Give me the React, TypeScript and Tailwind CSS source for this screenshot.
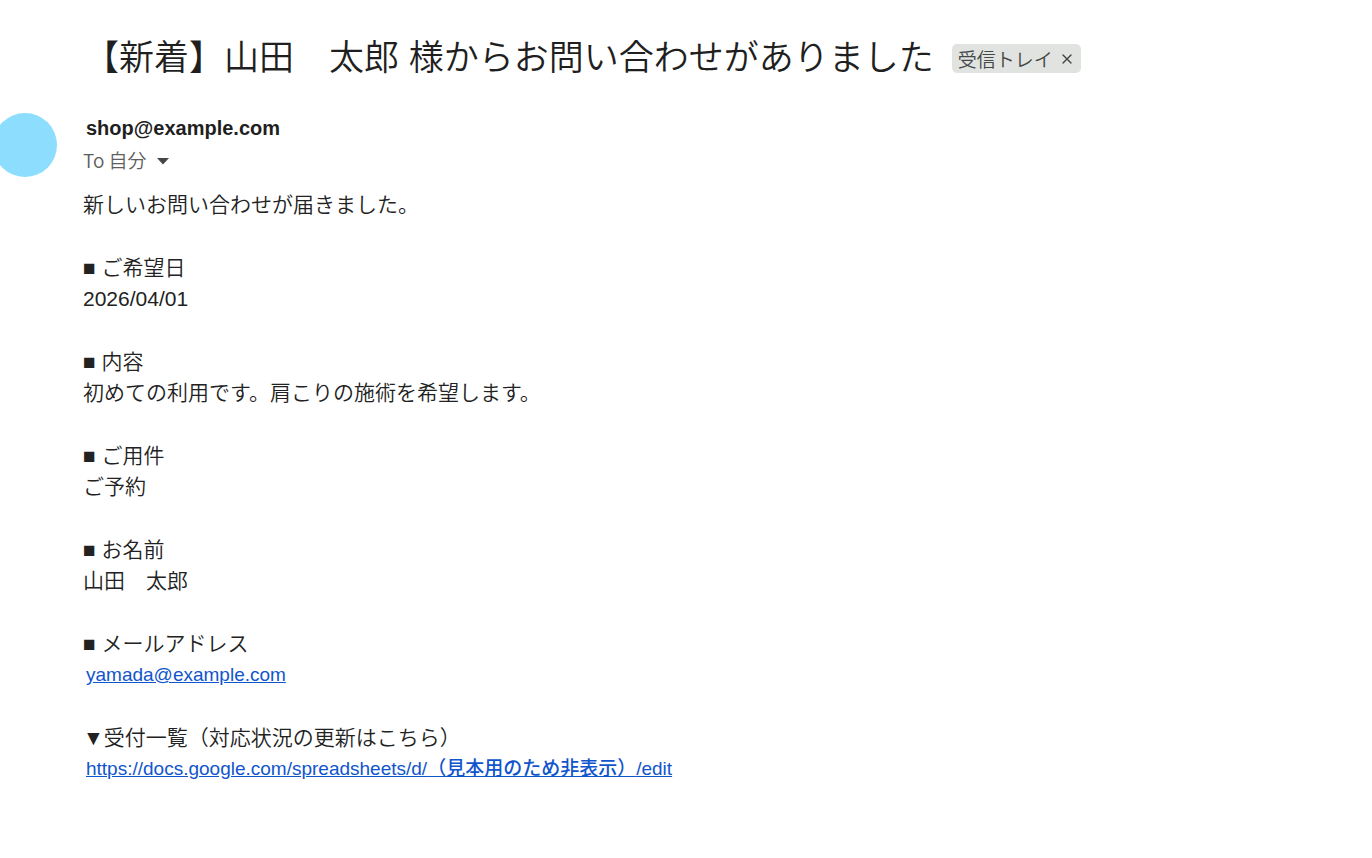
import { X } from "lucide-react";

const sections = [
  { label: "ご希望日", value: "2026/04/01" },
  { label: "内容", value: "初めての利用です。肩こりの施術を希望します。" },
  { label: "ご用件", value: "ご予約" },
  { label: "お名前", value: "山田　太郎" },
];

function SectionLabel({ children }: { children: string }) {
  return <p>■ {children}</p>;
}

export default function App() {
  return (
    <main className="min-h-screen overflow-x-hidden bg-white pt-8 pb-16 font-['Liberation_Sans','Noto_Sans_CJK_JP',sans-serif] font-[350] text-[#1f1f1f]">
      <header className="flex flex-wrap items-center gap-[18px] pl-[84px]">
        <h1 className="text-[35px] leading-[52px] font-[350]">【新着】山田　太郎 様からお問い合わせがありました</h1>
        <span className="flex h-[29px] items-center gap-[6px] rounded-[5px] bg-[#e1e3e1] px-[6px] font-['Noto_Sans_CJK_JP',sans-serif] text-[19px] leading-[27px] text-[#444746]">
          受信トレイ
          <button type="button" aria-label="受信トレイ ラベルを削除">
            <X className="mt-[2px] h-4 w-4" strokeWidth={2} />
          </button>
        </span>
      </header>

      <article className="mt-[29px] flex items-start">
        <div className="-ml-[7px] h-16 w-16 shrink-0 rounded-full bg-[#8dddff]" />
        <div className="ml-[26px] min-w-0 flex-1">
          <p className="pl-[3px] text-[20px] leading-[31px] font-bold">shop@example.com</p>
          <button type="button" className="flex h-[33px] items-center gap-[9px] font-['Noto_Sans_CJK_JP',sans-serif] text-[19px] text-[#5e5e5e]">
            To 自分
            <svg viewBox="0 0 14 8" className="h-2 w-[14px]" fill="#444746" aria-hidden="true">
              <path d="M1 1h12L7 7.5z" />
            </svg>
          </button>

          <div className="mt-3 text-[21px] leading-[31px] text-[#222222]">
            <p>新しいお問い合わせが届きました。</p>
            {sections.map((s) => (
              <section key={s.label} className="mt-8">
                <SectionLabel>{s.label}</SectionLabel>
                <p>{s.value}</p>
              </section>
            ))}
            <section className="mt-8">
              <SectionLabel>メールアドレス</SectionLabel>
              <p className="pl-[3px] text-[19px]">
                <a href="mailto:yamada@example.com" className="text-[#1155cc] underline">yamada@example.com</a>
              </p>
            </section>
            <section className="mt-8">
              <p>▼受付一覧（対応状況の更新はこちら）</p>
              <p className="pl-[3px] text-[19px]">
                <a href="https://docs.google.com/spreadsheets/" className="text-[#1155cc] underline">
                  https://docs.google.com/spreadsheets/d/<span className="font-medium">（見本用のため非表示）</span>/edit
                </a>
              </p>
            </section>
          </div>
        </div>
      </article>
    </main>
  );
}
